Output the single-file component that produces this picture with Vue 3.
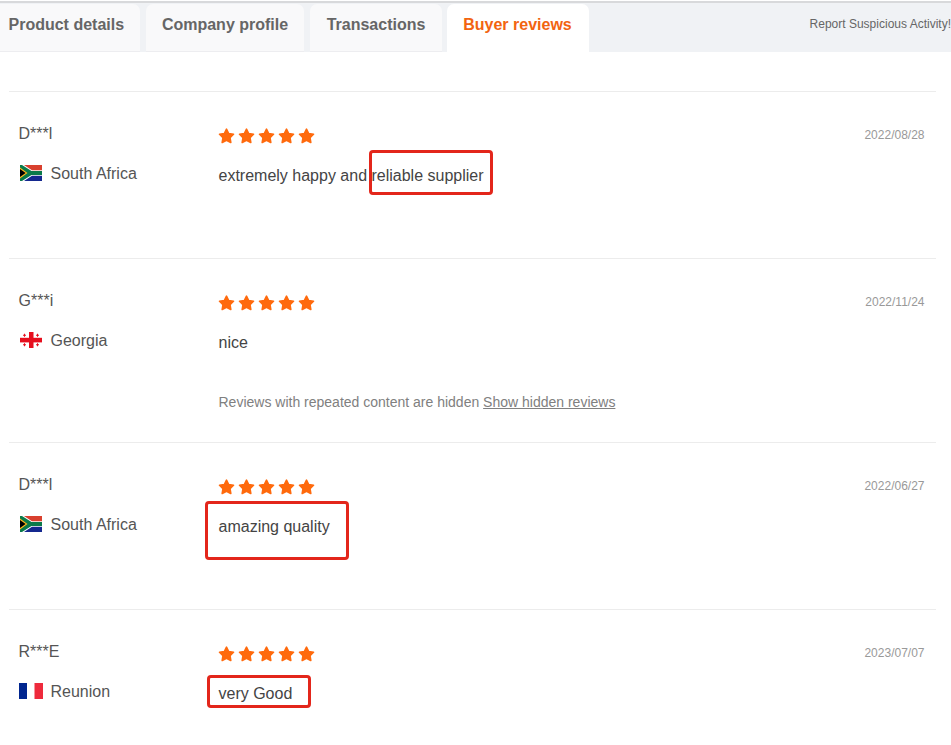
<script setup>
const tabs = [
  { label: 'Product details', cls: 'tab-first' },
  { label: 'Company profile', cls: 'tab-second' },
  { label: 'Transactions', cls: 'tab-third' },
  { label: 'Buyer reviews', cls: 'tab-active' },
]
const reviews = [
  { name: 'D***l', country: 'South Africa', flag: 'za', text: 'extremely happy and reliable supplier', date: '2022/08/28', mark: 'mark-one' },
  { name: 'G***i', country: 'Georgia', flag: 'ge', text: 'nice', date: '2022/11/24', hidden: true },
  { name: 'D***l', country: 'South Africa', flag: 'za', text: 'amazing quality', date: '2022/06/27', mark: 'mark-two' },
  { name: 'R***E', country: 'Reunion', flag: 'fr', text: 'very Good', date: '2023/07/07', mark: 'mark-three' },
]
const starPath = 'M8 1.2l2.2 4.4 4.8.7-3.500 3.400.8 4.800L8 12.200l-4.300 2.300.8-4.800L1 6.300l4.800-.7z'
</script>

<template>
  <div class="page">
    <nav class="tabbar">
      <div v-for="t in tabs" :key="t.label" class="tab" :class="t.cls">{{ t.label }}</div>
      <a class="report">Report Suspicious Activity!</a>
    </nav>
    <section class="list">
      <article v-for="(r, i) in reviews" :key="i" class="row">
        <div class="who">
          <div class="name">{{ r.name }}</div>
          <div class="country">
            <svg v-if="r.flag === 'za'" class="flag" viewBox="0 0 24 16">
              <rect x="1" width="22" height="8" fill="#d9402e" />
              <rect x="1" y="8" width="22" height="8" fill="#14288f" />
              <path d="M1 0h4l8 5.200h10v5.600H13L5 16H1z" fill="#fff" />
              <path d="M1 0h2l9.500 6H23v4H12.500L3 16H1z" fill="#0a7a4a" />
              <path d="M1 2.600L8.500 8 1 13.400z" fill="#ffb81c" />
              <path d="M1 4L6.600 8 1 12z" fill="#000" />
            </svg>
            <svg v-else-if="r.flag === 'ge'" class="flag" viewBox="0 0 24 16">
              <rect x="10" width="4.500" height="16" fill="#e60f1e" />
              <rect x="1" y="5.800" width="22" height="4.600" fill="#e60f1e" />
              <path d="M5 1.700h1v1h1v1H6v1H5v-1H4v-1h1zM18 1.700h1v1h1v1h-1v1h-1v-1h-1v-1h1zM5 11.300h1v1h1v1H6v1H5v-1H4v-1h1zM18 11.300h1v1h1v1h-1v1h-1v-1h-1v-1h1z" fill="#e60f1e" />
            </svg>
            <svg v-else class="flag" viewBox="0 0 24 16">
              <rect width="8" height="16" fill="#00268f" />
              <rect x="8" width="7.500" height="16" fill="#fff" />
              <rect x="15.500" width="8.500" height="16" fill="#ee2a3c" />
            </svg>
            <span>{{ r.country }}</span>
          </div>
        </div>
        <div class="body">
          <div class="stars">
            <svg v-for="n in 5" :key="n" class="star" viewBox="0 0 16 16">
              <path :d="starPath" />
            </svg>
          </div>
          <p class="text">{{ r.text }}</p>
          <p v-if="r.hidden" class="note">
            Reviews with repeated content are hidden <u>Show hidden reviews</u>
          </p>
        </div>
        <time class="date">{{ r.date }}</time>
        <i v-if="r.mark" class="mark" :class="r.mark"></i>
      </article>
    </section>
  </div>
</template>

<style scoped>
.page {
  width: 951px;
  height: 745px;
  overflow: hidden;
  background: #fff;
  font-family: "Liberation Sans", Arial, sans-serif;
  color: #333;
}
.tabbar {
  display: flex;
  align-items: flex-end;
  box-sizing: border-box;
  height: 51px;
  margin-top: 1px;
  margin-bottom: 39px;
  background: #f0f2f5;
  border-top: 2px solid #d8d9db;
}
.tab {
  height: 48px;
  box-sizing: border-box;
  padding-top: 11px;
  background: #f9f9fa;
  border-radius: 7px 7px 0 0;
  border-bottom: 1px solid #ededf0;
  font-size: 16px;
  font-weight: 700;
  line-height: 20px;
  text-align: center;
  color: #666;
  flex: none;
}
.tab-first { width: 140px; padding-left: 8.5px; text-align: left; border-top-left-radius: 0; }
.tab-second { width: 158px; margin-left: 6px; }
.tab-third { width: 132px; margin-left: 6px; }
.tab-active { width: 142px; margin-left: 5px; padding-right: 1px; background: #fff; border-bottom-color: #fff; color: #f26411; }
.report {
  margin-left: auto;
  align-self: flex-start;
  margin-top: 13px;
  font-size: 12px;
  line-height: 16px;
  color: #666;
  white-space: nowrap;
}
.list {
  margin: 0 15px 0 9px;
}
.row {
  position: relative;
  display: grid;
  grid-template-columns: 200px 1fr auto;
  box-sizing: border-box;
  min-height: 167px;
  padding: 32px 12px 30px 9px;
  border-top: 1px solid #ececec;
}
.name {
  margin-left: 0.5px;
  font-size: 16px;
  line-height: 20px;
  color: #555;
}
.country {
  display: flex;
  align-items: center;
  gap: 8px;
  margin-top: 20px;
  margin-left: 0.5px;
  font-size: 16px;
  line-height: 20px;
  color: #555;
}
.flag {
  width: 24px;
  height: 16px;
  margin-top: -3px;
  flex: none;
}
.body {
  margin-top: -1px;
  padding-top: 5px;
  padding-left: 0.5px;
}
.stars {
  display: flex;
  gap: 3px;
  margin-left: -1px;
}
.star {
  width: 17px;
  height: 16px;
  fill: #ff6a0d;
  stroke: #ff6a0d;
  stroke-width: 1.6;
  stroke-linejoin: round;
}
.text {
  margin: 22px 0 0;
  font-size: 16px;
  line-height: 20px;
  color: #444;
}
.note {
  margin: 39px 0 0;
  font-size: 14px;
  line-height: 20px;
  color: #808080;
}
.date {
  margin-top: 3px;
  margin-right: -0.5px;
  font-size: 12px;
  line-height: 16px;
  color: #999;
}
.mark {
  position: absolute;
  box-sizing: border-box;
  border: 3px solid #e3261b;
  border-radius: 4px;
}
.mark-one { left: 360px; top: 58px; width: 124px; height: 45px; }
.mark-two { left: 196px; top: 58px; width: 144px; height: 59px; }
.mark-three { left: 198px; top: 65px; width: 104px; height: 33px; }
</style>

<style>
html, body { margin: 0; overflow: hidden; }
</style>
